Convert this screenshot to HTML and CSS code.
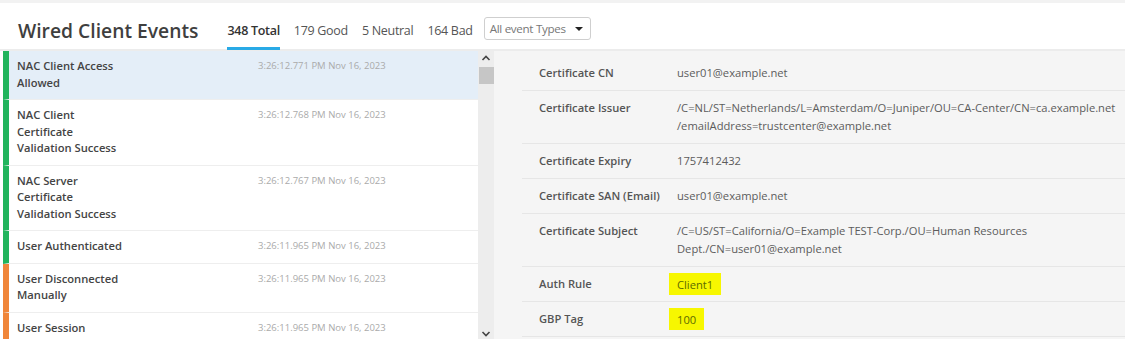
FILE: index.html
```html
<!DOCTYPE html>
<html>
<head>
<meta charset="utf-8">
<link rel="stylesheet" href="styles.css">
</head>
<body>
<div class="m-head">
    <h1 class="m-head-title">Wired Client Events</h1>
    <ul class="m-tabs">
        <li class="z-active">348 Total</li>
        <li>179 Good</li>
        <li>5 Neutral</li>
        <li>164 Bad</li>
    </ul>
    <div class="m-select">All event Types <span class="m-select-caret"></span></div>
</div>
<div class="m-main">
    <ul class="m-events">
        <li class="z-good z-selected"><span class="m-events-name">NAC Client Access Allowed</span><span class="m-events-time">3:26:12.771 PM Nov 16, 2023</span></li>
        <li class="z-good"><span class="m-events-name">NAC Client Certificate Validation Success</span><span class="m-events-time">3:26:12.768 PM Nov 16, 2023</span></li>
        <li class="z-good"><span class="m-events-name">NAC Server Certificate Validation Success</span><span class="m-events-time">3:26:12.767 PM Nov 16, 2023</span></li>
        <li class="z-good"><span class="m-events-name">User Authenticated</span><span class="m-events-time">3:26:11.965 PM Nov 16, 2023</span></li>
        <li class="z-bad"><span class="m-events-name">User Disconnected Manually</span><span class="m-events-time">3:26:11.965 PM Nov 16, 2023</span></li>
        <li class="z-bad"><span class="m-events-name">User Session</span><span class="m-events-time">3:26:11.965 PM Nov 16, 2023</span></li>
    </ul>
    <div class="m-scroll">
        <svg class="m-scroll-arrow" width="10" height="6" viewBox="0 0 10 6"><path d="M1.5 5 L5 1.5 L8.5 5" fill="none" stroke="#444" stroke-width="1.6"/></svg>
        <div class="m-scroll-thumb"></div>
        <div class="m-scroll-fill"></div>
        <svg class="m-scroll-arrow" width="10" height="6" viewBox="0 0 10 6"><path d="M1.5 1 L5 4.5 L8.5 1" fill="none" stroke="#444" stroke-width="1.6"/></svg>
    </div>
    <dl class="m-detail">
        <div class="m-detail-row"><dt>Certificate CN</dt><dd>user01@example.net</dd></div>
        <div class="m-detail-row"><dt>Certificate Issuer</dt><dd>/C=NL/ST=Netherlands/L=Amsterdam/O=Juniper/OU=CA-Center/CN=ca.example.net<br>/emailAddress=trustcenter@example.net</dd></div>
        <div class="m-detail-row"><dt>Certificate Expiry</dt><dd>1757412432</dd></div>
        <div class="m-detail-row"><dt>Certificate SAN (Email)</dt><dd>user01@example.net</dd></div>
        <div class="m-detail-row"><dt>Certificate Subject</dt><dd>/C=US/ST=California/O=Example TEST-Corp./OU=Human Resources<br>Dept./CN=user01@example.net</dd></div>
        <div class="m-detail-row"><dt>Auth Rule</dt><dd><mark>Client1</mark></dd></div>
        <div class="m-detail-row"><dt>GBP Tag</dt><dd><mark>100</mark></dd></div>
    </dl>
</div>
</body>
</html>
```

FILE: styles.css
```css
html, body {margin: 0; height: 100%; overflow: hidden;}
body {background: #f2f2f2; padding-top: 3px; box-sizing: border-box; font: 11.2px/1.4 "Open Sans", "Liberation Sans", sans-serif; color: #4a4a4a; display: flex; flex-direction: column;}

.m-head {display: flex; align-items: center; height: 46px; background: #fff; border-bottom: 2px solid #ececec; flex: none;}
.m-head-title {margin: 9px 29px 0 18px; font-size: 19.3px; font-weight: 600; color: #3f3f3f;}
.m-tabs {display: flex; list-style: none; margin: 0; padding: 0; align-self: stretch;}
.m-tabs > li {margin-right: 14px; padding-top: 19px; line-height: 18px; font-size: 12.5px; color: #555; border-bottom: 3px solid transparent; letter-spacing: -0.3px; box-sizing: border-box; height: 47px;}
.m-tabs > li.z-active {font-weight: 600; color: #333; border-bottom-color: #29aae6;}
.m-select {margin: 4px 0 0 -3px; width: 100px; height: 21px; box-sizing: content-box; border: 1px solid #cfcfcf; border-radius: 3px; padding: 0 0 0 5px; font-size: 11.6px; line-height: 21px; color: #777; position: relative; letter-spacing: -0.3px;}
.m-select-caret {position: absolute; right: 7px; top: 9px; border: 4px solid transparent; border-top: 4px solid #222; border-bottom: 0;}

.m-main {display: flex; flex: 1; min-height: 0; background: #fff;}
.m-events {list-style: none; margin: 0; padding: 0 0 0 3px; width: 475px; flex: none; overflow: hidden;}
.m-events > li {display: flex; padding: 7px 0 8px 8px; border-left: 6px solid #21b45c; border-bottom: 1px solid #eeeeee; line-height: 16.5px;}
.m-events > li.z-bad {border-left-color: #f0863a;}
.m-events > li.z-selected {background: #e4eef8;}
.m-events-name {width: 110px; margin-right: 131px; font-weight: 600; color: #444;}
.m-events-time {font-size: 9.5px; color: #aaa; line-height: 15px;}

.m-scroll {width: 16px; flex: none; background: #ededed; display: flex; flex-direction: column; align-items: center;}
.m-scroll-arrow {flex: none; margin: 4px 0 6px;}
.m-scroll-thumb {width: 15px; height: 17px; background: #c6c6c6; flex: none; align-self: flex-end;}
.m-scroll-fill {flex: 1;}
.m-scroll-arrow:last-child {margin: 6px 0 2px;}

.m-detail {flex: 1; margin: 0; padding: 5px 0 0 28px; background: #f5f5f5; overflow: hidden;}
.m-detail-row {display: flex; padding: 8px 0 8px 17px; border-bottom: 1px solid #e6e6e6; line-height: 18px;}
.m-detail-row dt {width: 138px; flex: none; font-weight: 600; color: #555;}
.m-detail-row dd {margin: 0; color: #5c5c5c; white-space: nowrap;}
.m-detail-row mark {margin-left: -8px; padding: 3.5px 8px; background: #f7f700; color: #5d6b00;}
```
